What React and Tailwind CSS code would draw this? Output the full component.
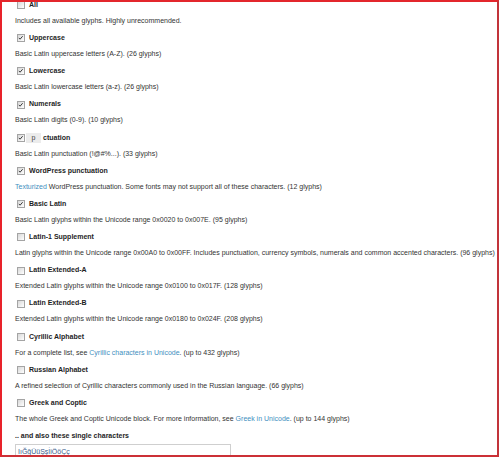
import React from 'react';

const Link = ({ children }) => <span className="text-[#3f8fc0]">{children}</span>;

const groups = [
  { label: 'All', checked: false, desc: 'Includes all available glyphs. Highly unrecommended.' },
  { label: 'Uppercase', checked: true, desc: 'Basic Latin uppercase letters (A-Z). (26 glyphs)' },
  { label: 'Lowercase', checked: true, desc: 'Basic Latin lowercase letters (a-z). (26 glyphs)' },
  { label: 'Numerals', checked: true, desc: 'Basic Latin digits (0-9). (10 glyphs)' },
  { label: 'ctuation', checked: true, covered: true, desc: 'Basic Latin punctuation (!@#%...). (33 glyphs)' },
  {
    label: 'WordPress punctuation',
    checked: true,
    desc: (
      <>
        <Link>Texturized</Link> WordPress punctuation. Some fonts may not support all of these characters. (12 glyphs)
      </>
    ),
  },
  { label: 'Basic Latin', checked: true, desc: 'Basic Latin glyphs within the Unicode range 0x0020 to 0x007E. (95 glyphs)' },
  {
    label: 'Latin-1 Supplement',
    checked: false,
    desc: 'Latin glyphs within the Unicode range 0x00A0 to 0x00FF. Includes punctuation, currency symbols, numerals and common accented characters. (96 glyphs)',
  },
  { label: 'Latin Extended-A', checked: false, desc: 'Extended Latin glyphs within the Unicode range 0x0100 to 0x017F. (128 glyphs)' },
  { label: 'Latin Extended-B', checked: false, desc: 'Extended Latin glyphs within the Unicode range 0x0180 to 0x024F. (208 glyphs)' },
  {
    label: 'Cyrillic Alphabet',
    checked: false,
    desc: (
      <>
        For a complete list, see <Link>Cyrillic characters in Unicode</Link>. (up to 432 glyphs)
      </>
    ),
  },
  {
    label: 'Russian Alphabet',
    checked: false,
    desc: 'A refined selection of Cyrillic characters commonly used in the Russian language. (66 glyphs)',
  },
  {
    label: 'Greek and Coptic',
    checked: false,
    desc: (
      <>
        The whole Greek and Coptic Unicode block. For more information, see <Link>Greek in Unicode</Link>. (up to 144 glyphs)
      </>
    ),
  },
];

const Checkbox = ({ checked }) => (
  <span className="relative ml-[2px] inline-block h-[8px] w-[8px] shrink-0 border border-[#a4a4a4] bg-gradient-to-br from-[#d8d8d8] to-white">
    {checked && (
      <svg viewBox="0 0 8 8" className="absolute left-0 top-0 h-[6px] w-[6px]">
        <path d="M1 3.8 L2.8 5.6 L6.2 1.6" fill="none" stroke="#3a3a3a" strokeWidth="1.3" />
      </svg>
    )}
  </span>
);

const App = () => {
  return (
    <div className="h-[458px] w-[500px] overflow-hidden bg-white" style={{ fontFamily: '"Liberation Sans", Arial, sans-serif' }}>
      <div className="h-[457px] w-[499px] overflow-hidden border-[2px] border-t-[#e3262c] border-l-[#e8222a] border-r-[#c2343a] border-b-[#cc3036] pl-[13px]">
        <div className="-mt-[5px]">
          {groups.map(group => (
            <div key={group.label} className="h-[33.2px]">
              <div className="flex h-[16px] items-center gap-[4px]">
                <Checkbox checked={group.checked} />
                {group.covered && (
                  <span className="-ml-[3px] -mr-[2px] flex h-[10px] w-[15px] shrink-0 items-center justify-center bg-[#ececec] text-[7px] text-[#444]">
                    p
                  </span>
                )}
                <span className="text-[7px] font-bold text-[#1e1e1e]">{group.label}</span>
              </div>
              <div className="flex h-[16px] items-center text-[7px] text-[#333]">
                <span className="whitespace-nowrap">{group.desc}</span>
              </div>
            </div>
          ))}
          <div className="flex h-[16px] items-center text-[7px] font-bold text-[#1e1e1e]">.. and also these single characters</div>
          <div className="h-[20px] w-[216px] border border-[#cfcfcf] px-[2px] pt-[3px] text-[7px] leading-[8px] text-[#3a5a8a]">
            IıĞğÜüŞşİiÖöÇç
          </div>
        </div>
      </div>
    </div>
  );
};

export default App;
